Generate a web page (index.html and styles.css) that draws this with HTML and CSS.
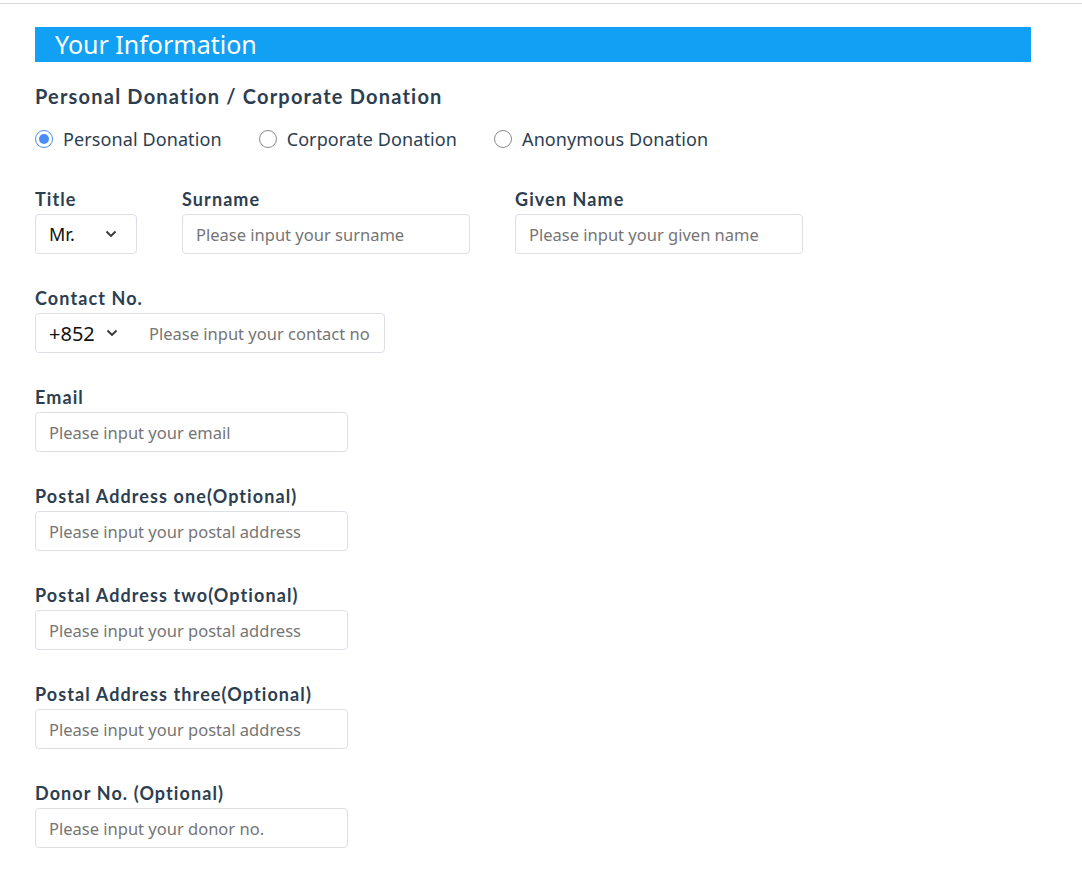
FILE: index.html
```html
<html>
  <head>
    <link rel="stylesheet" href="styles.css">
  </head>
  <body>
    <div class="topbar"></div>
    <main class="info">
      <h2 class="info-title">Your Information</h2>

      <h3 class="section-title">Personal Donation / Corporate Donation</h3>
      <div class="radios">
        <label class="radio radio-checked"><span class="radio-dot"></span>Personal Donation</label>
        <label class="radio"><span class="radio-dot"></span>Corporate Donation</label>
        <label class="radio"><span class="radio-dot"></span>Anonymous Donation</label>
      </div>

      <div class="row">
        <div class="field">
          <div class="field-label">Title</div>
          <div class="select select-title">
            <span>Mr.</span>
            <svg class="chevron" viewBox="0 0 12 8"><path d="M1.5 1.5 L6 6 L10.5 1.5" /></svg>
          </div>
        </div>
        <div class="field">
          <div class="field-label">Surname</div>
          <input class="input input-name" type="text" placeholder="Please input your surname" />
        </div>
        <div class="field">
          <div class="field-label">Given Name</div>
          <input class="input input-name" type="text" placeholder="Please input your given name" />
        </div>
      </div>

      <div class="field">
        <div class="field-label">Contact No.</div>
        <div class="input-group">
          <div class="select select-code">
            <span>+852</span>
            <svg class="chevron" viewBox="0 0 12 8"><path d="M1.5 1.5 L6 6 L10.5 1.5" /></svg>
          </div>
          <input class="input-bare" type="text" placeholder="Please input your contact no" />
        </div>
      </div>

      <div class="field">
        <div class="field-label">Email</div>
        <input class="input" type="text" placeholder="Please input your email" />
      </div>
      <div class="field">
        <div class="field-label">Postal Address one(Optional)</div>
        <input class="input" type="text" placeholder="Please input your postal address" />
      </div>
      <div class="field">
        <div class="field-label">Postal Address two(Optional)</div>
        <input class="input" type="text" placeholder="Please input your postal address" />
      </div>
      <div class="field">
        <div class="field-label">Postal Address three(Optional)</div>
        <input class="input" type="text" placeholder="Please input your postal address" />
      </div>
      <div class="field">
        <div class="field-label">Donor No. (Optional)</div>
        <input class="input" type="text" placeholder="Please input your donor no." />
      </div>
    </main>
  </body>
</html>
```

FILE: styles.css
```css
html,
body {
  margin: 0;
  padding: 0;
}
body {
  background: #fff;
  font-family: "Noto Sans", sans-serif;
  color: #2c3e50;
}
.topbar {
  height: 3px;
  border-bottom: 1px solid #d8d8dc;
}
.info {
  width: 996px;
  margin-left: 35px;
  padding-top: 23px;
}
.info-title {
  margin: 0;
  height: 35px;
  line-height: 35px;
  padding-left: 20px;
  background: #12a0f5;
  color: #fff;
  font-weight: normal;
  font-size: 25px;
}
.section-title {
  margin: 22px 0 0;
  font-family: Lato, sans-serif;
  font-weight: bold;
  font-size: 20px;
  letter-spacing: 1.2px;
  line-height: 24px;
}
.radios {
  display: flex;
  margin-top: 16px;
  height: 30px;
  align-items: center;
}
.radio {
  display: flex;
  align-items: center;
  font-size: 18px;
  letter-spacing: 0.1px;
  color: #2c3e50;
  margin-right: 37px;
}
.radio-dot {
  box-sizing: border-box;
  width: 18px;
  height: 18px;
  border-radius: 50%;
  border: 1px solid #8a8a8a;
  margin-right: 10px;
  position: relative;
}
.radio-checked .radio-dot {
  border-color: #4a8cf5;
}
.radio-checked .radio-dot::after {
  content: "";
  position: absolute;
  left: 3px;
  top: 3px;
  width: 10px;
  height: 10px;
  border-radius: 50%;
  background: #4a8cf5;
}
.row {
  display: flex;
  gap: 45px;
  margin-top: 35px;
}
.field {
  margin-top: 34px;
}
.row .field {
  margin-top: 0;
}
.field-label {
  font-family: Lato, sans-serif;
  font-weight: bold;
  font-size: 18px;
  line-height: 20px;
  letter-spacing: 1.1px;
  margin-bottom: 5px;
}
.input,
.select,
.input-group {
  box-sizing: border-box;
  height: 40px;
  border: 1px solid #dcdfe6;
  border-radius: 4px;
  background: #fff;
}
.input {
  display: block;
  width: 313px;
  padding: 0 13px;
  font-family: "Noto Sans", sans-serif;
  font-size: 16.5px;
  color: #333;
  outline: none;
}
.input-name {
  width: 288px;
}
.input::placeholder,
.input-bare::placeholder {
  color: #757575;
}
.select {
  display: flex;
  align-items: center;
  font-size: 18px;
  color: #111;
}
.select-title {
  width: 102px;
  padding-left: 13px;
}
.select-title span {
  width: 56px;
}
.chevron {
  width: 12px;
  height: 8px;
  fill: none;
  stroke: #333;
  stroke-width: 1.8;
}
.input-group {
  display: flex;
  width: 350px;
  align-items: center;
}
.select-code {
  border: none;
  height: 38px;
  padding-left: 13px;
  width: 100px;
  flex: none;
  font-size: 20px;
}
.select-code span {
  width: 57px;
}
.input-bare {
  border: none;
  outline: none;
  min-width: 0;
  flex: 1;
  height: 38px;
  padding: 0 0 0 13px;
  font-family: "Noto Sans", sans-serif;
  font-size: 16.5px;
  background: transparent;
}
```
